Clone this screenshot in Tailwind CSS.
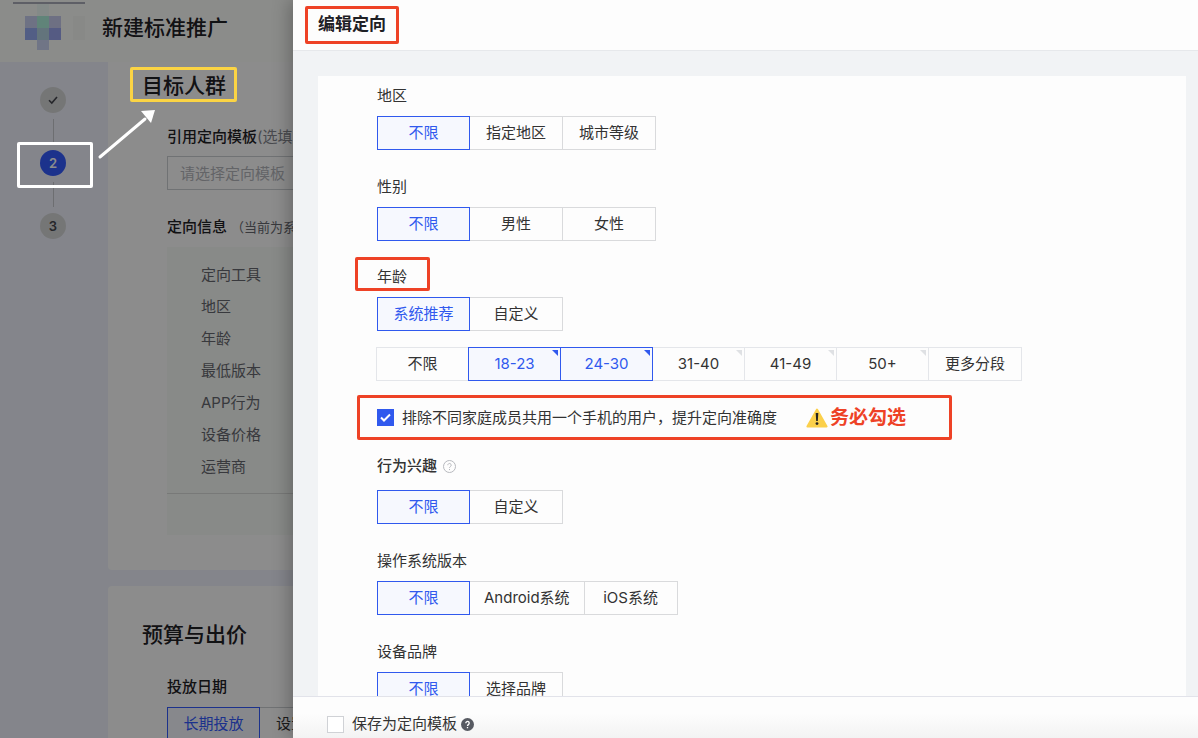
<!DOCTYPE html>
<html lang="zh-CN">
<head>
    <meta charset="UTF-8">
    <meta name="viewport" content="width=device-width, initial-scale=1.0">
    <title>新建标准推广</title>
    <script src="https://cdn.jsdelivr.net/npm/@tailwindcss/browser@4"></script>
</head>
<body class="relative h-screen overflow-hidden bg-[#f0f3fd] font-['Inter','Noto_Sans_CJK_SC',sans-serif] text-[15px] leading-5 text-[#333333]">

    <!-- Page behind the drawer -->
    <div class="flex h-full flex-col">
        <header class="flex h-[62px] shrink-0 items-center bg-[#fdfffc] pb-[6px] pl-[25px]">
            <svg class="h-12 w-[60px]" viewBox="0 0 60 48" shape-rendering="crispEdges">
                <rect x="12" y="0" width="12" height="12" fill="#f0fcf8"/>
                <rect x="0" y="12" width="12" height="12" fill="#c8d0f0"/>
                <rect x="12" y="12" width="12" height="12" fill="#b0f0dc"/>
                <rect x="24" y="12" width="12" height="12" fill="#c8cdee"/>
                <rect x="0" y="24" width="12" height="12" fill="#95abf2"/>
                <rect x="12" y="24" width="12" height="12" fill="#b4d4e2"/>
                <rect x="24" y="24" width="12" height="12" fill="#9ca7ee"/>
                <rect x="12" y="36" width="12" height="10" fill="#ccd5f5"/>
                <rect x="48" y="12" width="12" height="24" fill="#f8f9f6"/>
            </svg>
            <h1 class="ml-[17px] text-[21px] leading-7 font-medium text-[#1f2126]">新建标准推广</h1>
        </header>

        <div class="flex min-h-0 flex-1">
            <ol class="flex w-[108px] shrink-0 flex-col items-center pt-[25px] pr-[2px] text-[13px] font-semibold">
                <li class="flex size-[26px] items-center justify-center rounded-full bg-[#d6d7d8]">
                    <svg class="size-3" viewBox="0 0 12 12" fill="none" stroke="#44464d" stroke-width="1.6"><path d="M2 6.2 4.8 9 10 3"/></svg>
                </li>
                <li class="my-[6px] h-[25px] w-px bg-[#c6c8ce]" aria-hidden="true"></li>
                <li class="flex size-[26px] items-center justify-center rounded-full bg-[#335bff] text-white">2</li>
                <li class="my-[6px] h-[25px] w-px bg-[#c6c8ce]" aria-hidden="true"></li>
                <li class="flex size-[26px] items-center justify-center rounded-full bg-[#d6d7d8] text-[#44464d]">3</li>
            </ol>

            <main class="flex min-w-0 flex-1 flex-col gap-4">
                <section class="h-[508px] shrink-0 rounded-b bg-white pt-[10px] pl-[34px]">
                    <h2 class="text-[21px] leading-7 font-medium text-[#1f2126]">目标人群</h2>
                    <div class="mt-[27px] pl-[25px]">
                        <label for="template" class="block font-medium text-[#1f2126]">引用定向模板<span class="font-normal text-[#85878f]">(选填)</span></label>
                        <input id="template" type="text" placeholder="请选择定向模板" class="mt-[9px] block h-[34px] w-80 border border-[#cdcfd4] bg-white px-3 placeholder:text-[#b4b6bc]">
                        <h3 class="mt-[27px] font-medium text-[#1f2126]">定向信息<span class="ml-1 text-[13px] font-normal text-[#66686f]">（当前为系统推荐）</span></h3>
                        <div class="mt-[10px] h-[288px] bg-[#f8fbf8] pt-[12px]">
                            <ul class="h-[235px] border-b border-[#dadcdb] pl-[34px] leading-8 text-[#66686f]">
                                <li>定向工具</li>
                                <li>地区</li>
                                <li>年龄</li>
                                <li>最低版本</li>
                                <li>APP行为</li>
                                <li>设备价格</li>
                                <li>运营商</li>
                            </ul>
                        </div>
                    </div>
                </section>

                <section class="shrink-0 rounded-t bg-white pt-[35px] pl-[34px]">
                    <h2 class="text-[21px] leading-7 font-medium text-[#1f2126]">预算与出价</h2>
                    <div class="mt-[28px] pl-[25px]">
                        <h3 class="font-medium text-[#1f2126]">投放日期</h3>
                        <div class="mt-[10px] flex">
                            <button type="button" class="h-[34px] w-[93px] border border-[#335bff] bg-[#f6f8ff] text-[#335bff]">长期投放</button>
                            <button type="button" class="h-[34px] border border-l-0 border-[#cdcfd4] px-4">设置日期</button>
                        </div>
                    </div>
                </section>
            </main>
        </div>
    </div>

    <div class="absolute inset-0 bg-black/45"></div>

    <!-- Drawer -->
    <aside class="absolute inset-y-0 right-0 left-[293px] flex flex-col bg-[#fdfdfd] shadow-[-4px_0_16px_rgba(0,0,0,0.25)]" aria-label="编辑定向">
        <header class="flex h-[51px] shrink-0 items-center border-b border-[#e6e8eb] px-3">
            <h2 class="flex h-[38px] items-center rounded-xs border-3 border-[#ee4226] px-[10px] pb-[2px] text-[17px] font-bold text-[#1f2126]">编辑定向</h2>
        </header>

        <form class="flex min-h-0 flex-1 flex-col">
            <div class="min-h-0 flex-1 overflow-hidden bg-[#f1f3f5] pt-[25px] pr-3 pl-[25px]">
                <div class="bg-[#fdfdfd] pt-[10px] pl-[59px]">
                    <section class="mb-[27px]">
                        <h3>地区</h3>
                        <div class="mt-[10px] flex">
                            <button type="button" class="h-[34px] w-[93px] border border-[#3059ee] bg-[#f6f8fe] text-[#3059ee]">不限</button>
                            <button type="button" class="h-[34px] min-w-[93px] border border-l-0 border-[#d9dadc] px-4">指定地区</button>
                            <button type="button" class="h-[34px] min-w-[93px] border border-l-0 border-[#d9dadc] px-4">城市等级</button>
                        </div>
                    </section>

                    <section class="mb-[26px]">
                        <h3>性别</h3>
                        <div class="mt-[10px] flex">
                            <button type="button" class="h-[34px] w-[93px] border border-[#3059ee] bg-[#f6f8fe] text-[#3059ee]">不限</button>
                            <button type="button" class="h-[34px] min-w-[93px] border border-l-0 border-[#d9dadc] px-4">男性</button>
                            <button type="button" class="h-[34px] min-w-[93px] border border-l-0 border-[#d9dadc] px-4">女性</button>
                        </div>
                    </section>

                    <section class="mb-4">
                        <h3 class="relative">年龄
                            <span class="absolute -top-[10px] -left-[22px] h-[34px] w-[75px] rounded-xs border-3 border-[#ee4226]"></span>
                        </h3>
                        <div class="mt-[10px] flex">
                            <button type="button" class="h-[34px] w-[93px] border border-[#3059ee] bg-[#f6f8fe] text-[#3059ee]">系统推荐</button>
                            <button type="button" class="h-[34px] min-w-[93px] border border-l-0 border-[#d9dadc] px-4">自定义</button>
                        </div>
                        <div class="mt-4 -ml-px flex">
                            <button type="button" class="h-[34px] w-[92px] border border-r-0 border-[#e4e6ea]">不限</button>
                            <button type="button" class="relative h-[34px] w-[92px] border border-r-0 border-[#3059ee] bg-[#f6f8fe] text-[#3059ee]">18-23
                                <svg class="absolute top-[2px] right-[2px] size-[6px]" viewBox="0 0 6 6"><path d="M0 0h6v6z" fill="#3059ee"/></svg>
                            </button>
                            <button type="button" class="relative h-[34px] w-[93px] border border-[#3059ee] bg-[#f6f8fe] text-[#3059ee]">24-30
                                <svg class="absolute top-[2px] right-[2px] size-[6px]" viewBox="0 0 6 6"><path d="M0 0h6v6z" fill="#3059ee"/></svg>
                            </button>
                            <button type="button" class="relative h-[34px] w-[92px] border border-l-0 border-[#e4e6ea]">31-40
                                <svg class="absolute top-[2px] right-[2px] size-[6px]" viewBox="0 0 6 6"><path d="M0 0h6v6z" fill="#dfe1e4"/></svg>
                            </button>
                            <button type="button" class="relative h-[34px] w-[92px] border border-l-0 border-[#e4e6ea]">41-49
                                <svg class="absolute top-[2px] right-[2px] size-[6px]" viewBox="0 0 6 6"><path d="M0 0h6v6z" fill="#dfe1e4"/></svg>
                            </button>
                            <button type="button" class="relative h-[34px] w-[92px] border border-l-0 border-[#e4e6ea]">50+
                                <svg class="absolute top-[2px] right-[2px] size-[6px]" viewBox="0 0 6 6"><path d="M0 0h6v6z" fill="#dfe1e4"/></svg>
                            </button>
                            <button type="button" class="h-[34px] w-[93px] border border-l-0 border-[#e4e6ea]">更多分段</button>
                        </div>
                        <div class="mt-[14px] -ml-5 flex h-[45px] w-[595px] items-center rounded-xs border-3 border-[#ee4226] pl-[17px]">
                            <label class="flex items-center gap-2">
                                <span class="relative flex size-[17px]">
                                    <input type="checkbox" checked class="size-[17px] appearance-none border border-[#d0d2d6] bg-white checked:border-[#3059ee] checked:bg-[#3059ee]">
                                    <svg class="pointer-events-none absolute inset-0 size-[17px]" viewBox="0 0 17 17" fill="none" stroke="#fff" stroke-width="2"><path d="m4 8.500 3 3 6-6"/></svg>
                                </span>
                                排除不同家庭成员共用一个手机的用户，提升定向准确度
                            </label>
                            <strong class="ml-[29px] flex items-center gap-[2px] text-[19px] font-bold text-[#ee4226]">
                                <svg class="h-5 w-[22px]" viewBox="0 0 22 20">
                                    <path d="M11 1.5 20.6 18.4H1.4z" fill="#fbd04b" stroke="#fbd04b" stroke-width="2" stroke-linejoin="round"/>
                                    <path d="M9.700 5h2.600l-.5 8h-1.600z" fill="#222"/>
                                    <circle cx="11" cy="15.600" r="1.400" fill="#222"/>
                                </svg>
                                务必勾选
                            </strong>
                        </div>
                    </section>

                    <section class="mb-[27px]">
                        <h3 class="flex items-center gap-[6px] font-medium">行为兴趣
                            <svg class="size-[13px]" viewBox="0 0 13 13" fill="none" stroke="#b7b9be"><circle cx="6.5" cy="6.5" r="6"/><path d="M4.8 5.2a1.7 1.7 0 1 1 2.6 1.4c-.6.4-.9.7-.9 1.3M6.5 9v1.1"/></svg>
                        </h3>
                        <div class="mt-[14px] flex">
                            <button type="button" class="h-[34px] w-[93px] border border-[#3059ee] bg-[#f6f8fe] text-[#3059ee]">不限</button>
                            <button type="button" class="h-[34px] min-w-[93px] border border-l-0 border-[#d9dadc] px-4">自定义</button>
                        </div>
                    </section>

                    <section class="mb-[27px]">
                        <h3>操作系统版本</h3>
                        <div class="mt-[10px] flex">
                            <button type="button" class="h-[34px] w-[93px] border border-[#3059ee] bg-[#f6f8fe] text-[#3059ee]">不限</button>
                            <button type="button" class="h-[34px] min-w-[93px] border border-l-0 border-[#d9dadc] px-[14px]">Android系统</button>
                            <button type="button" class="h-[34px] min-w-[93px] border border-l-0 border-[#d9dadc] px-4">iOS系统</button>
                        </div>
                    </section>

                    <section>
                        <h3>设备品牌</h3>
                        <div class="mt-[10px] flex">
                            <button type="button" class="h-[34px] w-[93px] border border-[#3059ee] bg-[#f6f8fe] text-[#3059ee]">不限</button>
                            <button type="button" class="h-[34px] min-w-[93px] border border-l-0 border-[#d9dadc] px-4">选择品牌</button>
                        </div>
                    </section>
                </div>
            </div>

            <footer class="flex h-[42px] shrink-0 items-start border-t border-[#e2e3ea] bg-linear-to-b from-[#fdfdfd] from-40% to-[#f3f3f3] pt-[17px] pl-[34px]">
                <label class="flex items-center gap-2">
                    <input type="checkbox" class="size-[17px] appearance-none border border-[#d0d2d6] bg-white">
                    保存为定向模板
                </label>
                <svg class="mt-1 ml-1 size-[13px]" viewBox="0 0 13 13"><circle cx="6.5" cy="6.5" r="6.5" fill="#575a62"/><path d="M4.8 5.2a1.7 1.7 0 1 1 2.6 1.4c-.6.4-.9.7-.9 1.3M6.5 9v1.2" fill="none" stroke="#fff" stroke-width="1.3"/></svg>
            </footer>
        </form>
    </aside>

    <!-- Callouts over the dimmed page -->
    <div class="pointer-events-none absolute top-[2px] left-[13px] h-[2px] w-[72px] bg-[#5e5f66]"></div>
    <div class="pointer-events-none absolute top-[67px] left-[130px] h-[35px] w-[107px] rounded-xs border-3 border-[#fbd444]"></div>
    <div class="pointer-events-none absolute top-[142px] left-[17px] h-[46px] w-[76px] rounded-xs border-3 border-white"></div>
    <svg class="pointer-events-none absolute top-[105px] left-[95px] h-[56px] w-[64px]" viewBox="0 0 64 56">
        <path d="M5 52 50 14" stroke="#fff" stroke-width="3" stroke-linecap="round"/>
        <path d="M60 5 46 6 56 18z" fill="#fff"/>
    </svg>
</body>
</html>
